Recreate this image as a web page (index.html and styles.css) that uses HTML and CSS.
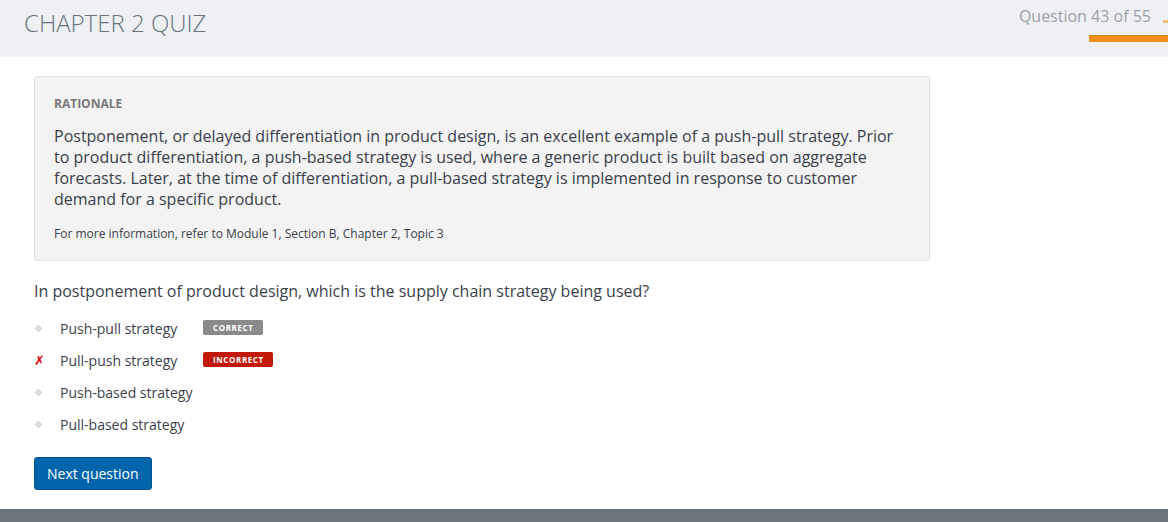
FILE: index.html
```html
<!DOCTYPE html>
<html>
<head>
<meta charset="utf-8">
<link rel="stylesheet" href="styles.css">
</head>
<body>
<header class="top">
  <h1 class="title">CHAPTER 2 QUIZ</h1>
  <div class="progress">
    <div class="progress-row">
      <span class="count">Question 43 of 55</span>
      <span class="cut"></span>
    </div>
    <div class="bar"></div>
  </div>
</header>
<main class="content">
  <section class="rationale">
    <h2 class="label">RATIONALE</h2>
    <p class="text">Postponement, or delayed differentiation in product design, is an excellent example of a push-pull strategy. Prior to product differentiation, a push-based strategy is used, where a generic product is built based on aggregate forecasts. Later, at the time of differentiation, a pull-based strategy is implemented in response to customer demand for a specific product.</p>
    <p class="ref">For more information, refer to Module 1, Section B, Chapter 2, Topic 3</p>
  </section>
  <p class="question">In postponement of product design, which is the supply chain strategy being used?</p>
  <ul class="options">
    <li class="option"><span class="mark"><svg width="7" height="7" viewBox="0 0 8 8"><path d="M4 0.5 L7.5 4 L4 7.5 L0.5 4 Z" fill="#e2e2e2" stroke="#bdbdbd" stroke-width="1"/></svg></span><span class="opt-text">Push-pull strategy</span><span class="badge badge-correct">CORRECT</span></li>
    <li class="option"><span class="mark"><span class="cross">&#x2717;</span></span><span class="opt-text">Pull-push strategy</span><span class="badge badge-incorrect">INCORRECT</span></li>
    <li class="option"><span class="mark"><svg width="7" height="7" viewBox="0 0 8 8"><path d="M4 0.5 L7.5 4 L4 7.5 L0.5 4 Z" fill="#e2e2e2" stroke="#bdbdbd" stroke-width="1"/></svg></span><span class="opt-text">Push-based strategy</span></li>
    <li class="option"><span class="mark"><svg width="7" height="7" viewBox="0 0 8 8"><path d="M4 0.5 L7.5 4 L4 7.5 L0.5 4 Z" fill="#e2e2e2" stroke="#bdbdbd" stroke-width="1"/></svg></span><span class="opt-text">Pull-based strategy</span></li>
  </ul>
  <button class="next">Next question</button>
</main>
<footer class="foot"></footer>
</body>
</html>
```
FILE: styles.css
```css
* { box-sizing: border-box; }
html, body { margin: 0; padding: 0; }
body {
  font-family: "Open Sans", "DejaVu Sans", sans-serif;
  background: #fff;
  color: #333;
  width: 1168px;
  height: 522px;
  overflow: hidden;
  display: flex;
  flex-direction: column;
}
.top {
  height: 57px;
  background: #eff0f4;
  display: flex;
  justify-content: space-between;
  align-items: flex-start;
  flex-shrink: 0;
}
.title {
  margin: 7px 0 0 24px;
  font-weight: 300;
  font-size: 24px;
  line-height: 32px;
  color: #68727f;
}
.progress {
  display: flex;
  flex-direction: column;
  align-items: flex-end;
  padding-top: 5px;
}
.progress-row {
  display: flex;
  align-items: center;
  gap: 12px;
}
.count {
  font-size: 16px;
  line-height: 22px;
  color: #9ba1a8;
}
.cut {
  display: block;
  width: 5px;
  height: 3px;
  margin-top: 10px;
  background: #f0c080;
}
.bar {
  margin-top: 8px;
  width: 79px;
  height: 7px;
  background: #f18e1c;
  border-top: 1px solid #d98018;
}
.content {
  flex: 1;
  padding: 19px 0 0 34px;
}
.rationale {
  width: 896px;
  background: #f3f3f3;
  border: 1px solid #e2e2e2;
  border-radius: 3px;
  padding: 19px 20px 18px 19px;
}
.label {
  margin: 0;
  font-size: 12px;
  font-weight: 700;
  color: #777;
  line-height: 16px;
}
.text {
  margin: 14px 0 0;
  font-size: 16px;
  line-height: 21px;
  color: #3a3f4b;
  padding-right: 14px;
}
.ref {
  margin: 16px 0 0;
  font-size: 12px;
  line-height: 16px;
  color: #3a3f4b;
}
.question {
  margin: 19px 0 0;
  font-size: 16px;
  line-height: 22px;
  color: #3a3f4b;
}
.options {
  list-style: none;
  margin: 10px 0 0;
  padding: 0;
}
.option {
  display: flex;
  align-items: center;
  height: 32px;
  font-size: 14px;
  color: #3a3f4b;
}
.mark {
  width: 26px;
  display: flex;
  justify-content: flex-start;
  padding-left: 1px;
}
.cross {
  color: #e00000;
  font-size: 13px;
  font-weight: 700;
  font-style: italic;
  line-height: 14px;
  margin-left: -1px;
}
.opt-text {
  width: 143px;
}
.badge {
  font-size: 8px;
  font-weight: 700;
  letter-spacing: 0.6px;
  color: #fff;
  height: 15px;
  line-height: 15px;
  padding: 0 10px;
  border-radius: 2px;
  margin-top: -2px;
}
.badge-correct { background: #8a8a8a; }
.badge-incorrect { background: #c21807; padding: 0 9px 0 10px; }
.next {
  margin-top: 17px;
  font-family: "Open Sans", "DejaVu Sans", sans-serif;
  font-size: 14px;
  color: #fff;
  background: #0065aa;
  border: 1px solid #005290;
  border-radius: 3px;
  height: 33px;
  padding: 0 12px;
  cursor: pointer;
}
.foot {
  height: 13px;
  background: #6c747c;
  flex-shrink: 0;
}
```
